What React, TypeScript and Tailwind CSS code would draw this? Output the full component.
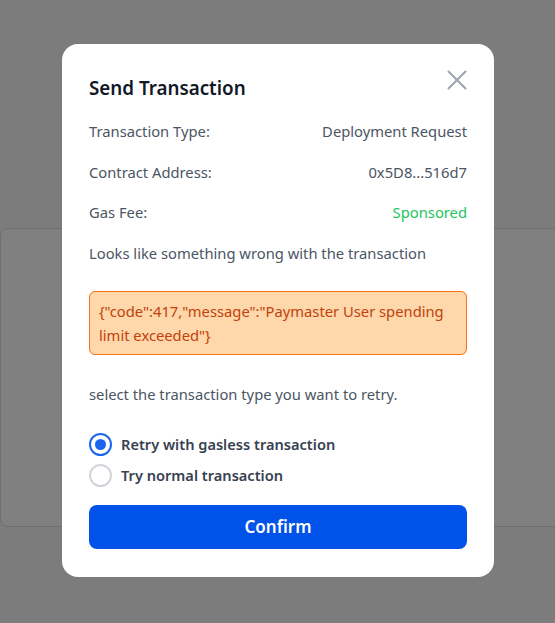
import React, { useState } from "react";

function CloseIcon() {
  return (
    <svg width="20" height="20" viewBox="0 0 20 20" fill="none">
      <path d="M1.5 1.5L18.5 18.5M18.5 1.5L1.5 18.5" stroke="#9ca3af" strokeWidth="2" strokeLinecap="round" />
    </svg>
  );
}

function Row({ label, value, valueClass }: { label: string; value: string; valueClass?: string }) {
  return (
    <div className="flex h-[40.5px] items-center justify-between">
      <span className="text-[#4b5563]">{label}</span>
      <span className={valueClass ?? "text-[#4b5563]"}>{value}</span>
    </div>
  );
}

function Radio({ checked, label, onClick }: { checked: boolean; label: string; onClick: () => void }) {
  return (
    <button onClick={onClick} className="flex h-[31px] items-center gap-[9px] text-left">
      {checked ? (
        <span className="flex h-[23px] w-[23px] items-center justify-center rounded-full border-2 border-[#1c64f2]">
          <span className="h-[11px] w-[11px] rounded-full bg-[#1c64f2]" />
        </span>
      ) : (
        <span className="h-[23px] w-[23px] rounded-full border-2 border-[#d1d5db]" />
      )}
      <span className="text-[14.6px] font-semibold text-[#374151]">{label}</span>
    </button>
  );
}

export default function App() {
  const [choice, setChoice] = useState("gasless");

  return (
    <div
      className="relative h-[623px] w-[555px] overflow-hidden bg-[#7b7c7b] text-[14.75px]"
      style={{ fontFamily: '"Noto Sans", "Open Sans", sans-serif' }}
    >
      <div className="mt-[228px] h-[299px] w-[570px] rounded-lg border border-[#6e6f6e] bg-[#808080]" />

      <div className="absolute left-[62px] top-[44px] w-[432px] rounded-2xl bg-white px-[27px] pb-[28px] pt-[30px]">
        <div className="flex items-start justify-between">
          <h2 className="text-[18.8px] font-semibold leading-7 text-[#111827]">Send Transaction</h2>
          <button className="mt-[-4px]">
            <CloseIcon />
          </button>
        </div>

        <div className="mt-[9px] flex flex-col">
          <Row label="Transaction Type:" value="Deployment Request" />
          <Row label="Contract Address:" value="0x5D8...516d7" />
          <Row label="Gas Fee:" value="Sponsored" valueClass="text-[#22c55e]" />
          <div className="flex h-[40.5px] items-center text-[#4b5563]">
            Looks like something wrong with the transaction
          </div>
        </div>

        <div className="mt-[18px] rounded-md border border-[#f97316] bg-[#fed7aa] px-[9px] py-[7px] leading-6 text-[#c2410c]">
          {'{"code":417,"message":"Paymaster User spending limit exceeded"}'}
        </div>

        <p className="mt-[27px] leading-6 text-[#4b5563]">select the transaction type you want to retry.</p>

        <div className="mt-[23px] flex flex-col">
          <Radio checked={choice === "gasless"} label="Retry with gasless transaction" onClick={() => setChoice("gasless")} />
          <Radio checked={choice === "normal"} label="Try normal transaction" onClick={() => setChoice("normal")} />
        </div>

        <button className="mt-[14px] h-[44px] w-full rounded-lg bg-[#0052e8] text-[17px] font-semibold text-white">
          Confirm
        </button>
      </div>
    </div>
  );
}
